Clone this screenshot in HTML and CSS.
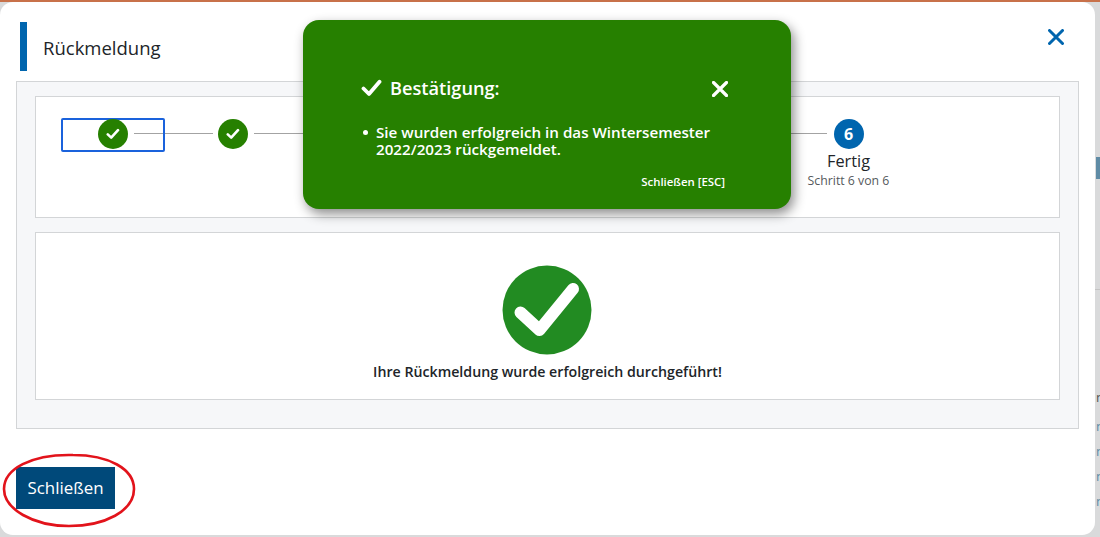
FILE: index.html
```html
<!DOCTYPE html>
<html lang="de">
<head>
<meta charset="utf-8">
<title>Rückmeldung</title>
<link rel="stylesheet" href="styles.css">
</head>
<body>
<div class="page">
  <div class="topbar"></div>
  <main class="modal">
    <header class="modal-head">
      <h1 class="modal-title">Rückmeldung</h1>
      <button class="modal-close" aria-label="Schließen">
        <svg width="16" height="16" viewBox="0 0 16 16"><path d="M1.5 1.5 14.5 14.5M14.5 1.5 1.5 14.5" fill="none" stroke="#0065ae" stroke-width="3" stroke-linecap="round"/></svg>
      </button>
    </header>
    <section class="panel">
      <div class="card steps">
        <div class="step step-first">
          <span class="dot done"><svg width="14" height="12" viewBox="0 0 14 12"><path d="M1.8 6.4 5.2 9.6 12 2.2" fill="none" stroke="#fff" stroke-width="2.6" stroke-linecap="round" stroke-linejoin="round"/></svg></span>
        </div>
        <span class="line line-a"></span>
        <div class="step">
          <span class="dot done"><svg width="14" height="12" viewBox="0 0 14 12"><path d="M1.8 6.4 5.2 9.6 12 2.2" fill="none" stroke="#fff" stroke-width="2.6" stroke-linecap="round" stroke-linejoin="round"/></svg></span>
        </div>
        <span class="line line-b"></span>
        <div class="step step-last">
          <span class="dot current">6</span>
          <span class="step-name">Fertig</span>
          <span class="step-sub">Schritt 6 von 6</span>
        </div>
      </div>
      <div class="card result">
        <svg class="result-icon" width="90" height="90" viewBox="0 0 90 90"><circle cx="45" cy="45" r="44.5" fill="#228b22"/><path d="M18.5 47.5 37.5 65 71 24" fill="none" stroke="#fff" stroke-width="12" stroke-linecap="round" stroke-linejoin="round"/></svg>
        <p class="result-text">Ihre Rückmeldung wurde erfolgreich durchgeführt!</p>
      </div>
    </section>
    <footer class="modal-foot">
      <button class="btn">Schließen</button>
    </footer>
    <svg class="marker" width="136" height="78" viewBox="0 0 136 78"><path d="M72 4C30 3 3 18 3 38 3 58 32 75 68 75 104 75 133 60 133 38 133 18 108 4 72 4Z" fill="none" stroke="#e2131b" stroke-width="2.6"/></svg>
  </main>
  <aside class="backdrop">
    <span class="bd-tab"></span>
    <span class="bd-rule"></span>
    <span class="bd-link bd-link-1">n</span>
    <span class="bd-link bd-link-2">n</span>
    <span class="bd-link bd-link-3">n</span>
    <span class="bd-link bd-link-4">n</span>
    <span class="bd-link bd-link-5">n</span>
  </aside>
  <div class="toast" role="alert">
    <div class="toast-head">
      <svg width="21" height="18" viewBox="0 0 21 18"><path d="M2.5 9.5 8 15 18.5 2.8" fill="none" stroke="#fff" stroke-width="3.8" stroke-linecap="round" stroke-linejoin="round"/></svg>
      <span class="toast-title">Bestätigung:</span>
      <svg class="toast-x" width="16" height="16" viewBox="0 0 16 16"><path d="M1.5 1.5 14.5 14.5M14.5 1.5 1.5 14.5" fill="none" stroke="#fff" stroke-width="3.2" stroke-linecap="round"/></svg>
    </div>
    <ul class="toast-list">
      <li>Sie wurden erfolgreich in das Wintersemester 2022/2023 rückgemeldet.</li>
    </ul>
    <div class="toast-foot">Schließen [ESC]</div>
  </div>
</div>
</body>
</html>
```

FILE: styles.css
```css
* { box-sizing: border-box; }
html, body { margin: 0; height: 100%; overflow: hidden; }
body { font-family: "Open Sans", "Liberation Sans", sans-serif; color: #212529; background: #dcdcdc; }

.page { position: relative; width: 1100px; height: 537px; padding-top: 2px; display: flex; background: #d9dadb; }
.topbar { position: absolute; top: 0; left: 0; right: 0; height: 2px; background: #c8714a; }

.modal { position: relative; width: 1095px; height: 533px; background: #fff; border-radius: 13px; display: flex; flex-direction: column; padding: 0 16px 0 16px; }

.modal-head { height: 79px; display: flex; align-items: flex-start; justify-content: space-between; padding: 20px 15px 0 4px; flex: none; }
.modal-title { margin: 0; height: 49px; border-left: 7px solid #0065ae; padding-left: 16px; font-size: 18.5px; font-weight: 400; line-height: 51px; color: #212529; }
.modal-close { border: 0; background: none; padding: 0; margin: 7px 0 0; width: 16px; height: 16px; display: block; }
.modal-close svg { display: block; }

.panel { width: 1063px; height: 348px; background: #f6f7f9; border: 1px solid #d3d5d7; padding: 14px 18px; display: flex; flex-direction: column; gap: 14px; flex: none; }
.card { background: #fff; border: 1px solid #d3d5d7; width: 1025px; flex: none; }

.steps { height: 122px; display: flex; align-items: flex-start; padding: 21px 0 0 25px; }
.step { display: flex; flex-direction: column; align-items: center; flex: none; }
.step-first { width: 104px; height: 34px; border: 2px solid #1a62dc; border-radius: 2px; padding: 0 0 0 35px; align-items: flex-start; margin-right: -36px; position: relative; }
.step-first .dot { margin: -1px 0 0; }
.step-last { width: 81px; }
.dot { width: 30px; height: 30px; border-radius: 50%; display: flex; align-items: center; justify-content: center; color: #fff; font-size: 16px; font-weight: 700; flex: none; margin-top: 1px; }
.dot.done { background: #268000; }
.dot.current { background: #0065ae; }
.step-name { font-size: 16.3px; line-height: 22px; margin-top: 1px; color: #212529; }
.step-sub { font-size: 12.3px; line-height: 17px; margin-top: 0; color: #55595c; white-space: nowrap; }

.line { display: block; height: 1px; background: #a3a3a3; flex: none; margin-top: 15px; }
.line-a { width: 79px; margin-left: 5px; margin-right: 5px; }
.line-b { width: 573px; margin-left: 6px; margin-right: -19px; }

.result { height: 168px; display: flex; flex-direction: column; align-items: center; padding: 32px 2px 0 0; }
.result-icon { display: block; flex: none; }
.result-text { margin: 6px 0 0 2px; font-size: 14.2px; font-weight: 600; line-height: 22px; color: #212529; }

.modal-foot { flex: none; padding-top: 38px; }
.btn { display: block; width: 99px; height: 42px; border: 0; background: #00497a; color: #fff; font-family: inherit; font-size: 16.9px; line-height: 42px; padding: 0; text-align: center; }

.marker { position: absolute; left: 1px; top: 449px; pointer-events: none; }

.backdrop { position: relative; flex: 1; }
.bd-tab { position: absolute; left: 1px; top: 155px; width: 4px; height: 22px; background: #5f8ba5; }
.bd-rule { position: absolute; left: 0; right: 0; top: 287px; height: 1px; background: #c4c4c4; }
.bd-link { position: absolute; left: 1px; font-size: 13px; line-height: 14px; color: #5f8ba5; }
.bd-link-1 { top: 388px; color: #555; }
.bd-link-2 { top: 417px; }
.bd-link-3 { top: 442px; }
.bd-link-4 { top: 467px; }
.bd-link-5 { top: 492px; }

.toast { position: absolute; left: 303px; top: 20px; width: 488px; height: 189px; background: #268000; border-radius: 16px; box-shadow: 3px 5px 12px rgba(0, 0, 0, 0.45); color: #fff; padding: 56px 63px 0 58px; }
.toast-head { display: flex; align-items: center; height: 24px; }
.toast-head svg { display: block; flex: none; }
.toast-x { position: relative; top: 1px; }
.toast-title { margin-left: 8px; font-size: 18.2px; font-weight: 600; line-height: 24px; flex: 1; }
.toast-list { list-style: none; margin: 24px 0 0; padding: 0 0 0 15px; font-size: 15.2px; font-weight: 600; line-height: 17px; }
.toast-list li { position: relative; }
.toast-list li::before { content: ""; position: absolute; left: -13px; top: 6px; width: 5px; height: 5px; border-radius: 50%; background: #fff; }
.toast-foot { margin: 16px 3px 0 0; text-align: right; font-size: 11.4px; font-weight: 600; line-height: 15px; }
```
